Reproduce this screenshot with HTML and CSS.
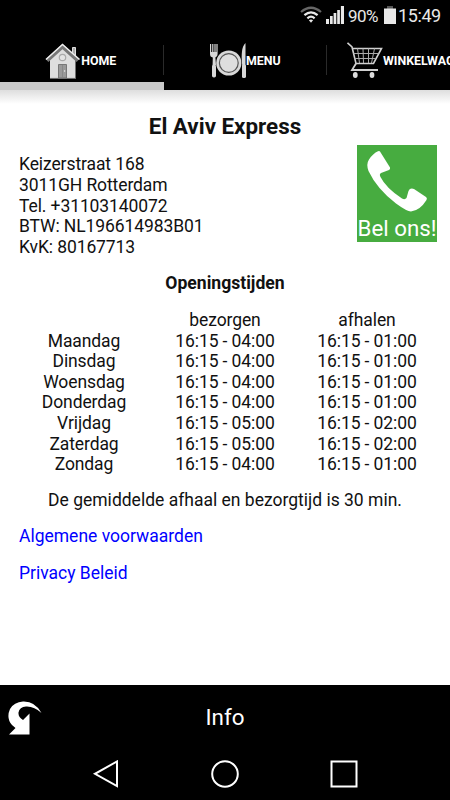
FILE: index.html
```html
<!DOCTYPE html>
<html lang="nl">
<head>
    <meta charset="UTF-8">
    <meta name="viewport" content="width=device-width, initial-scale=1.0">
    <title>El Aviv Express</title>
    <link rel="stylesheet" href="styles.css">
</head>
<body>
    <div class="status-bar">
        <svg class="wifi" width="22" height="18" viewBox="0 0 22 18">
            <g fill="none" stroke="#e8e8e8" stroke-width="2.2">
                <path d="M1 6 Q11 -2.5 21 6" stroke="#666"/>
                <path d="M4.4 9.2 Q11 3.4 17.6 9.2"/>
                <path d="M7.4 12.4 Q11 9 14.6 12.4"/>
            </g>
            <path d="M8.9 14.3 Q11 12.8 13.1 14.3 L11 16.8z" fill="#e8e8e8"/>
        </svg>
        <svg class="signal" width="18" height="18" viewBox="0 0 18 18" fill="#e8e8e8">
            <path d="M0 13h3v5H0zM4 10h2.7v8H4zM7.6 7h2.7v11H7.6zM11.2 4h2.7v14h-2.7zM14.9 0H18v18h-3.1z"/>
        </svg>
        <span class="percent">90%</span>
        <svg class="battery" width="12" height="18" viewBox="0 0 12 18">
            <path d="M3 0h6v3H3z" fill="#555"/>
            <path d="M0 2.5h12V18H0z" fill="#e8e8e8"/>
        </svg>
        <span class="clock">15:49</span>
    </div>

    <nav class="tabs">
        <a class="tab active">
            <svg width="36" height="38" viewBox="0 0 36 38">
                <path d="M27.500 5.500h3v9l-3-3z" fill="#aaa" stroke="#ddd"/>
                <path d="M17.500 5 L30.500 17 V36 H5 V17z" fill="#dedede"/>
                <path d="M2 18.500 L17.500 4.500 L33 18.500" fill="none" stroke="#777" stroke-width="4"/>
                <path d="M1 17.500 L17.500 2.500 L34.500 17.500" fill="none" stroke="#eee" stroke-width="1.600"/>
                <circle cx="17.500" cy="15.500" r="3.200" fill="#e4e4e4" stroke="#aaa" stroke-width="1.200"/>
                <path d="M13.500 22.500h8V36h-8z" fill="#999" stroke="#777"/>
                <path d="M17.500 23v13" stroke="#888"/>
                <circle cx="19.600" cy="29" r=".7" fill="#eee"/>
                <path d="M5 36.400h26" stroke="#777"/>
            </svg>
            <span>HOME</span>
        </a>
        <a class="tab">
            <svg width="36" height="38" viewBox="0 0 36 38">
                <g fill="#d8d8d8">
                    <path d="M0 2h1.200v8h1V2h1.200v8h1V2h1.200v8h.8V2h1.200v10q0 3-2.200 3.500L6 23H2.600l.2-7.500Q0 15 0 12z"/>
                    <rect x="2" y="22.500" width="4" height="13" rx="1.800"/>
                    <path d="M35.500 1v23h-3.200q-2.200-18 3.200-23z"/>
                    <rect x="32" y="22.500" width="4" height="13.500" rx="1.600"/>
                    <circle cx="18.800" cy="21" r="12.600"/>
                </g>
                <circle cx="18.800" cy="21" r="9.400" fill="#dedede" stroke="#555" stroke-width="1.200"/>
            </svg>
            <span>MENU</span>
        </a>
        <a class="tab">
            <svg width="36" height="38" viewBox="0 0 36 38">
                <g fill="none" stroke="#d0d0d0">
                    <path d="M.5 .8 L5 5 L9 21.500 H26.500 L34.500 6.500 H5.500" stroke-width="1.600"/>
                    <path d="M6.500 11.500H31.500M7.500 16.500H29M10.500 6.500L12.500 21M16 6.500L16.500 21M21.500 6.500V21M27.500 6.500L24.500 21" stroke="#aaa"/>
                    <path d="M9 21.500 L5 28 H31" stroke-width="1.800"/>
                </g>
                <ellipse cx="8.300" cy="33" rx="2.400" ry="2.900" fill="#ddd"/>
                <ellipse cx="25" cy="33" rx="2.400" ry="2.900" fill="#ddd"/>
            </svg>
            <span>WINKELWAGEN</span>
        </a>
    </nav>

    <main class="content">
        <h1>El Aviv Express</h1>
        <div class="contact">
            <div class="address">
                Keizerstraat 168<br>
                3011GH Rotterdam<br>
                Tel. +31103140072<br>
                BTW: NL196614983B01<br>
                KvK: 80167713
            </div>
            <a class="call">
                <svg width="80" height="70" viewBox="0 0 80 70">
                    <path d="M23 6.500 L33 22.500 Q33.500 24 32 25 L24 28 Q22 29 23.500 32 Q29 43 45 53.500 Q48 55 49.500 53 L51.500 46 Q53 42.500 57 44 L69 52 Q70.500 53 69.500 55 Q63 65.500 54 66.500 Q50 66.500 39 58.500 Q20 44 11.500 26 Q9 19 12 14.500 Q16 8.500 21 6.300 Q22.300 5.600 23 6.500z" fill="#fff"/>
                </svg>
                <span>Bel ons!</span>
            </a>
        </div>

        <h2>Openingstijden</h2>
        <table class="hours">
            <tr><td class="day"></td><td class="delivery">bezorgen</td><td>afhalen</td></tr>
            <tr><td>Maandag</td><td>16:15 - 04:00</td><td>16:15 - 01:00</td></tr>
            <tr><td>Dinsdag</td><td>16:15 - 04:00</td><td>16:15 - 01:00</td></tr>
            <tr><td>Woensdag</td><td>16:15 - 04:00</td><td>16:15 - 01:00</td></tr>
            <tr><td>Donderdag</td><td>16:15 - 04:00</td><td>16:15 - 01:00</td></tr>
            <tr><td>Vrijdag</td><td>16:15 - 05:00</td><td>16:15 - 02:00</td></tr>
            <tr><td>Zaterdag</td><td>16:15 - 05:00</td><td>16:15 - 02:00</td></tr>
            <tr><td>Zondag</td><td>16:15 - 04:00</td><td>16:15 - 01:00</td></tr>
        </table>

        <p class="average">De gemiddelde afhaal en bezorgtijd is 30 min.</p>
        <p><a class="link">Algemene voorwaarden</a></p>
        <p><a class="link">Privacy Beleid</a></p>
    </main>

    <footer class="info-bar">
        <svg width="34" height="34" viewBox="0 0 34 34">
            <path d="M33.500 12 Q27 0 15 .5 Q6 1 2 8 Q-2 17 4 24 L7.500 27 L1 33.500 H21.500 V12.500 L15 19 Q10 16 10.500 11.500 Q11.500 6 18 5.500 Q26 5 33.500 12z" fill="#fff"/>
        </svg>
        <span class="info-title">Info</span>
    </footer>
    <div class="nav-bar">
        <svg width="28" height="28" viewBox="0 0 28 28"><path d="M25 1.500V26L3 13.800z"/></svg>
        <svg width="28" height="28" viewBox="0 0 28 28"><circle cx="14" cy="14" r="12.800"/></svg>
        <svg width="28" height="28" viewBox="0 0 28 28"><path d="M1.500 1.500H26.500V26.500H1.500z"/></svg>
    </div>
</body>
</html>
```
FILE: styles.css
```css
* {
    box-sizing: border-box;
}

body {
    font-family: Roboto, 'Liberation Sans', sans-serif;
    font-size: 17.5px;
    line-height: 20.6px;
    margin: 0;
    height: 800px;
    display: flex;
    flex-direction: column;
    overflow: hidden;
    background-color: #fff;
    color: #111;
}

svg {
    display: block;
    flex-shrink: 0;
}

.status-bar {
    display: flex;
    justify-content: flex-end;
    height: 32px;
    padding: 6px 9px 0 0;
    background-color: #000;
    color: #e8e8e8;
}

.signal {
    margin-left: 4px;
}

.percent {
    margin-left: 4px;
    font-size: 17px;
    letter-spacing: -0.5px;
    width: 36px;
}

.clock {
    margin-left: 2px;
    font-size: 18px;
    width: 43px;
    letter-spacing: -0.4px;
}

.tabs {
    display: flex;
    flex-shrink: 0;
    height: 58px;
    overflow: hidden;
    background-color: #000;
}

.tab {
    display: flex;
    flex: 0 0 163.5px;
    justify-content: center;
    height: 58px;
    padding-top: 10px;
    color: #fff;
    font-size: 12.4px;
    font-weight: bold;
    line-height: 38px;
    background: linear-gradient(#2a2a2a, #2a2a2a) right 13px / 1px 30px no-repeat;
}

.tab:first-child {
    padding-right: 2px;
}

.tab:last-child {
    flex: 1;
    min-width: 0;
    justify-content: flex-start;
    padding-left: 20px;
    white-space: nowrap;
    overflow: hidden;
    background: none;
}

.active {
    border-bottom: 8px solid #c9c9c9;
}

.content {
    flex: 1;
    padding: 23px 13px 0 19px;
    background: linear-gradient(#dedede, #fff) top / 100% 14px no-repeat;
}

h1 {
    margin: 0 0 15.4px;
    padding-right: 6px;
    font-size: 22.4px;
    line-height: 26px;
    text-align: center;
}

.contact {
    display: flex;
    justify-content: space-between;
}

.address {
    letter-spacing: -0.1px;
}

.call {
    width: 80px;
    height: 97px;
    margin-top: -9px;
    background-color: #47ac40;
    color: #fff;
    font-size: 22.3px;
    line-height: 26px;
    text-align: center;
    white-space: nowrap;
}

h2 {
    margin: 16px 0;
    padding-right: 6px;
    font-size: 17.6px;
    line-height: 20.6px;
    text-align: center;
}

.hours {
    width: 414px;
    border-collapse: collapse;
    table-layout: fixed;
    text-align: center;
    letter-spacing: -0.1px;
}

td {
    height: 20.6px;
    padding: 0;
}

.day {
    width: 130px;
}

.delivery {
    width: 152px;
}

p {
    margin: 15.6px 0;
}

.average {
    padding-right: 6px;
    text-align: center;
}

.link {
    color: #00f;
}

.info-bar {
    display: grid;
    grid-template-columns: 34px 1fr 34px;
    align-items: center;
    height: 65px;
    padding: 0 8px;
    background-color: #000;
    color: #fff;
    font-size: 22.4px;
    text-align: center;
}

.nav-bar {
    display: flex;
    justify-content: center;
    gap: 91px;
    height: 50px;
    padding-top: 10px;
    background-color: #000;
}

.nav-bar svg {
    fill: none;
    stroke: #fff;
    stroke-width: 2;
}
```
